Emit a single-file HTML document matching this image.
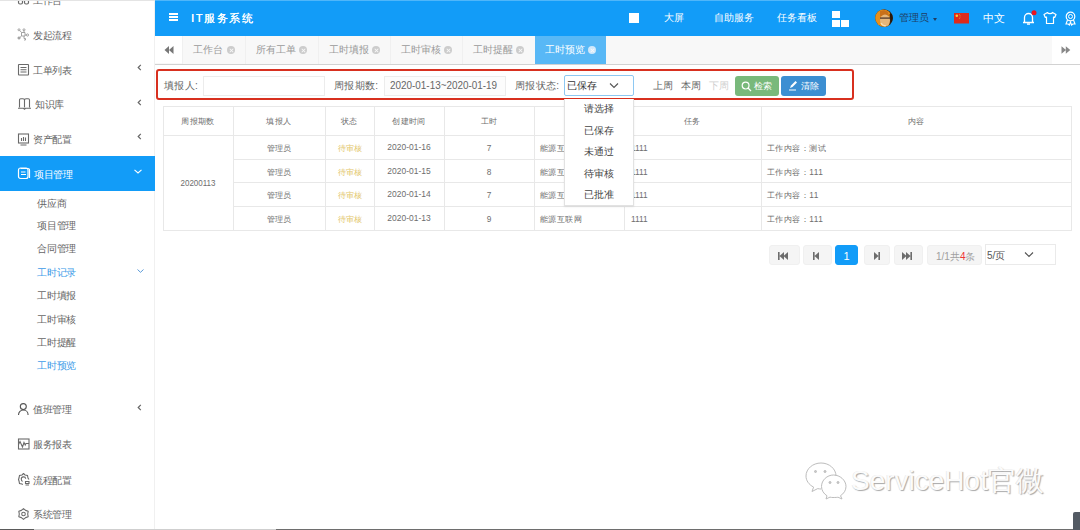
<!DOCTYPE html>
<html><head><meta charset="utf-8">
<style>
*{margin:0;padding:0;box-sizing:border-box}
html,body{width:1080px;height:530px;overflow:hidden;background:#fff;font-family:"Liberation Sans",sans-serif;color:#555}
.a{position:absolute;white-space:nowrap;line-height:1}
#side{position:absolute;left:0;top:0;width:155px;height:530px;background:#fff;border-right:1px solid #f0f0f0}
.mi{position:absolute;left:33px;font-size:10px;letter-spacing:-0.35px;line-height:1;color:#666}
.sub{position:absolute;left:37px;font-size:10px;letter-spacing:-0.2px;line-height:1;color:#666}
.ic{position:absolute;left:17px}
#hdr{position:absolute;left:155px;top:0;width:925px;height:36px;background:#129cf8}
#tabs{position:absolute;left:155px;top:36px;width:925px;height:29px;background:#f8f8f8;border-bottom:1px solid #d2d2d2}
.tab{position:absolute;top:0;height:28px;border-left:1px solid #f0f0f0;font-size:10.2px;color:#9a9a9a}
.tab span{position:absolute;top:9px;left:10px;line-height:1}
.cx{position:absolute;top:10px;width:8px;height:8px;border-radius:50%;background:#ccc}
.cx:before,.cx:after{content:"";position:absolute;left:1.5px;top:3.5px;width:5px;height:1px;background:#f9f9f9;transform:rotate(45deg)}
.cx:after{transform:rotate(-45deg)}
#form{position:absolute;left:156px;top:69px;width:698px;height:31px;border:2px solid #d8301f;border-radius:3px}
table{position:absolute;left:163px;top:106px;border-collapse:collapse;font-size:9px;color:#555}
td,th{border:1px solid #e6e6e6;font-weight:normal;text-align:center;padding:0}
.ht{top:13px;font-size:10px;color:#fff}
.ft{font-size:10px;letter-spacing:0.3px;color:#666}
.tt{font-size:8.3px;color:#6e6e6e}
.hl{position:absolute;height:1px;background:#e8e8e8}
.vl{position:absolute;width:1px;background:#e8e8e8}
.pg{position:absolute;top:245px;height:20px;background:#f5f5f5;border-radius:3px;border:1px solid #f0f0f0}
</style></head><body>
<div id="side">
  <div class="mi" style="top:-4px">工作台</div>
  <div class="mi" style="top:31px">发起流程</div>
  <div class="mi" style="top:66px">工单列表</div>
  <div class="mi" style="top:100px;left:35px">知识库</div>
  <div class="mi" style="top:135px">资产配置</div>
  <div style="position:absolute;left:0;top:156px;width:155px;height:35px;background:#129cf8"></div>
  <div class="mi" style="top:170px;color:#fff;left:34px">项目管理</div>
  <div class="sub" style="top:199px">供应商</div>
  <div class="sub" style="top:221px">项目管理</div>
  <div class="sub" style="top:244px">合同管理</div>
  <div class="sub" style="top:268px;color:#3c9be8">工时记录</div>
  <div class="sub" style="top:291px">工时填报</div>
  <div class="sub" style="top:315px">工时审核</div>
  <div class="sub" style="top:338px">工时提醒</div>
  <div class="sub" style="top:361px;color:#3c9be8">工时预览</div>
  <div class="mi" style="top:405px">值班管理</div>
  <div class="mi" style="top:440px">服务报表</div>
  <div class="mi" style="top:476px">流程配置</div>
  <div class="mi" style="top:510px">系统管理</div>

  <svg class="ic" style="top:-7px" width="13" height="13" viewBox="0 0 13 13" fill="none" stroke="#6a6a6a" stroke-width="1.2"><rect x="1.5" y="1" width="4" height="4" rx="1.5"/><rect x="7.5" y="1" width="4" height="4" rx="1.5"/><rect x="1.5" y="7" width="4" height="4" rx="1.5"/><rect x="7.5" y="7" width="4" height="4" rx="1.5"/></svg>
  <svg class="ic" style="top:28px" width="13" height="13" viewBox="0 0 13 13" fill="none" stroke="#9a9a9a" stroke-width="0.9"><circle cx="2" cy="1.8" r="1"/><circle cx="7" cy="1.8" r="1"/><circle cx="10.5" cy="7" r="1.1"/><circle cx="2" cy="10" r="1.1" fill="#aaa"/><path d="M2.8 2.5L4.5 4.5H8V8H4.5V4.5M6.5 2.5L7.5 4.5M9.4 7H8M3 9.4L4.5 8M7 8V10.5H8.5V12H7"/></svg>
  <svg class="ic" style="top:63px" width="13" height="13" viewBox="0 0 13 13" fill="none" stroke="#6a6a6a" stroke-width="1.1"><rect x="1.5" y="1.5" width="10" height="10.5" rx="0.5"/><path d="M3.5 4.5h6M3.5 6.8h6M3.5 9h6"/></svg>
  <svg class="ic" style="top:97px" width="15" height="13" viewBox="0 0 15 13" fill="none" stroke="#6a6a6a" stroke-width="1.1"><path d="M2.5 10.5V3c0-.8.4-1.2 1.2-1.2H6c.9 0 1.5.6 1.5 1.5v7.2M7.5 3.3c0-.9.6-1.5 1.5-1.5h2.3c.8 0 1.2.4 1.2 1.2v7.5"/><path d="M1 11.3h5.5l1 .9 1-.9H14"/></svg>
  <svg class="ic" style="top:132px" width="13" height="14" viewBox="0 0 13 14" fill="none" stroke="#6a6a6a" stroke-width="1.1"><rect x="1.5" y="2" width="10" height="9" /><path d="M4.5 9V6M6.5 9V5M8.5 9V5.5M3.5 13h6" /></svg>
  <svg class="ic" style="top:166px" width="14" height="14" viewBox="0 0 14 14" fill="none" stroke="#fff" stroke-width="1.2"><rect x="1.5" y="2" width="9.5" height="10.5" rx="2"/><path d="M3.5 2.5h7.5a1.5 1.5 0 0 1 1.5 1.5v8" /><path d="M4 6h4.5M4 8.5h5"/></svg>
  <svg class="ic" style="top:401px" width="13" height="15" viewBox="0 0 13 15" fill="none" stroke="#555" stroke-width="1.1"><circle cx="6.3" cy="5.6" r="3"/><path d="M1.5 14c0-3 2.2-5 4.8-5s4.8 2 4.8 5"/></svg>
  <svg class="ic" style="top:437px" width="13" height="14" viewBox="0 0 13 14" fill="none" stroke="#6a6a6a" stroke-width="1.1"><rect x="1.5" y="2" width="10.5" height="10"/><path d="M1.5 7.5L3 4.5 5.5 10 7 5.5 8.2 8 9 6.5h3"/></svg>
  <svg class="ic" style="top:472px" width="13" height="14" viewBox="0 0 13 14" fill="none" stroke="#6a6a6a" stroke-width="1.1"><path d="M6.5 1.5l1.5 1.5 2.5.5.5 2.5 1 1.5M6.5 1.5L5 3l-2.5.5L2 6 1.5 7.5l.5 1.5.5 2.5 2.5.5.8.7"/><path d="M5.5 9.5c-.8-.5-1.2-1.2-1.2-2.2a2.2 2.2 0 0 1 4.4-.5"/><path d="M8.5 9.5h3.5v2h-3.5zM8.5 13h3.5" /></svg>
  <svg class="ic" style="top:507px" width="13" height="14" viewBox="0 0 13 14" fill="none" stroke="#6a6a6a" stroke-width="1.1" stroke-linejoin="round"><path d="M6.50 1.60 L8.60 3.36 L11.18 4.30 L10.70 7.00 L11.18 9.70 L8.60 10.64 L6.50 12.40 L4.40 10.64 L1.82 9.70 L2.30 7.00 L1.82 4.30 L4.40 3.36Z"/><circle cx="6.5" cy="7" r="1.8"/></svg>
  <svg style="position:absolute;left:137px;top:64px" width="5" height="7" viewBox="0 0 5 7"><path d="M3.8 0.8L1.2 3.5 3.8 6.2" fill="none" stroke="#666" stroke-width="1.2"/></svg>
  <svg style="position:absolute;left:137px;top:99px" width="5" height="7" viewBox="0 0 5 7"><path d="M3.8 0.8L1.2 3.5 3.8 6.2" fill="none" stroke="#666" stroke-width="1.2"/></svg>
  <svg style="position:absolute;left:137px;top:133px" width="5" height="7" viewBox="0 0 5 7"><path d="M3.8 0.8L1.2 3.5 3.8 6.2" fill="none" stroke="#666" stroke-width="1.2"/></svg>
  <svg style="position:absolute;left:137px;top:404px" width="5" height="7" viewBox="0 0 5 7"><path d="M3.8 0.8L1.2 3.5 3.8 6.2" fill="none" stroke="#666" stroke-width="1.2"/></svg>
  <svg style="position:absolute;left:134px;top:169px" width="8" height="5" viewBox="0 0 8 5"><path d="M0.5 0.8L4 4 7.5 0.8" fill="none" stroke="#fff" stroke-width="1.1"/></svg>
  <svg style="position:absolute;left:137px;top:269px" width="7" height="4" viewBox="0 0 7 4"><path d="M0.5 0.5L3.5 3.3 6.5 0.5" fill="none" stroke="#5a9ad8" stroke-width="1"/></svg>
</div>
<div id="hdr">
  <div style="position:absolute;left:13.5px;top:13px;width:9.5px;height:2px;background:#fff;box-shadow:0 3px 0 #fff,0 6px 0 #fff"></div>
  <div class="a" style="left:36px;top:12.5px;font-size:11px;font-weight:normal;letter-spacing:1.6px;color:#fff;text-shadow:0.3px 0 0 #fff">IT服务系统</div>
  <div style="position:absolute;left:474px;top:13px;width:10px;height:10px;background:#fff"></div>
  <div class="a ht" style="left:509px">大屏</div>
  <div class="a ht" style="left:559px">自助服务</div>
  <div class="a ht" style="left:622px">任务看板</div>
  <div style="position:absolute;left:677px;top:11px;width:8px;height:7px;background:#fff"></div>
  <div style="position:absolute;left:677px;top:20px;width:8px;height:7px;background:#fff"></div>
  <div style="position:absolute;left:686px;top:20px;width:8px;height:7px;background:#fff"></div>
  <svg style="position:absolute;left:719.5px;top:9.2px" width="18" height="18" viewBox="0 0 18 18"><defs><clipPath id="av"><circle cx="9" cy="9" r="8.8"/></clipPath></defs><g clip-path="url(#av)"><rect width="18" height="18" fill="#3a2410"/><path d="M0 3C2 1 5 0 9 0.5 12 1 14 2 15 4L14 18H0z" fill="#e8901c"/><path d="M5 2c3-1.5 6-1 8 1l1 4-9 .5z" fill="#c8701a"/><ellipse cx="10" cy="11.5" rx="5" ry="6" fill="#e5b67a"/><path d="M5 8.3h10v1.6H5z" fill="#5a4030" opacity=".8"/><path d="M6 14c1 2 3 3 5 3" stroke="#f5dcb0" stroke-width="1.5" fill="none"/><path d="M15.5 5c1.5 3 1.8 8 .5 12" stroke="#2a1808" stroke-width="2.4" fill="none"/></g></svg>
  <div class="a ht" style="left:744px;color:#1f3d63">管理员</div>
  <div style="position:absolute;left:778px;top:17.5px;width:0;height:0;border-left:2.5px solid transparent;border-right:2.5px solid transparent;border-top:3px solid #1f3d63"></div>
  <svg style="position:absolute;left:799px;top:13px" width="15" height="10.5" viewBox="0 0 15 10.5"><rect width="15" height="10.5" fill="#de2a1c"/><circle cx="2.8" cy="2.8" r="1.3" fill="#f6d13a"/><circle cx="5.3" cy="1.3" r="0.45" fill="#f6d13a"/><circle cx="6" cy="2.6" r="0.45" fill="#f6d13a"/><circle cx="6" cy="4" r="0.45" fill="#f6d13a"/><circle cx="5.3" cy="5.2" r="0.45" fill="#f6d13a"/></svg>
  <div class="a ht" style="left:828px;font-size:11px">中文</div>
  <svg style="position:absolute;left:866px;top:10px" width="16" height="16" viewBox="0 0 16 16"><path d="M2 12.5h11M3.5 12.5V7.5a4 4 0 0 1 8 0v5M6 14.2h3" fill="none" stroke="#fff" stroke-width="1.3"/><circle cx="13" cy="2.8" r="2.5" fill="#e8141e"/></svg>
  <svg style="position:absolute;left:888px;top:11px" width="14" height="14" viewBox="0 0 14 14"><path d="M4.5 1.5L1 3.5 2.3 6.5 3.5 6v6.5h7V6l1.2.5L13 3.5 9.5 1.5C9 3 5 3 4.5 1.5z" fill="none" stroke="#fff" stroke-width="1.2" stroke-linejoin="round"/></svg>
  <svg style="position:absolute;left:908px;top:11px" width="15" height="15" viewBox="0 0 15 15"><circle cx="7.5" cy="5.5" r="4.3" fill="none" stroke="#fff" stroke-width="1.2"/><circle cx="7.5" cy="5.5" r="2" fill="none" stroke="#fff" stroke-width="1"/><path d="M4.5 9L3 13h2.2l1.2 1L7.5 11l1.1 3 1.2-1H12L10.5 9" fill="none" stroke="#fff" stroke-width="1.1"/></svg>
</div>
<div id="tabs">
  <div style="position:absolute;left:0;top:0;width:27px;height:27px;background:#fff"></div>
  <div class="tab" style="left:27px;width:63px"><span>工作台</span><i class="cx" style="left:44px"></i></div>
  <div class="tab" style="left:90px;width:73px"><span>所有工单</span><i class="cx" style="left:53px"></i></div>
  <div class="tab" style="left:163px;width:72px"><span>工时填报</span><i class="cx" style="left:53px"></i></div>
  <div class="tab" style="left:235px;width:72px"><span>工时审核</span><i class="cx" style="left:53px"></i></div>
  <div class="tab" style="left:307px;width:73px"><span>工时提醒</span><i class="cx" style="left:53px"></i></div>
  <div class="tab" style="left:380px;width:71px;background:#58b8f6;color:#fff;border-left:none"><span>工时预览</span><i class="cx" style="left:53px;background:#d0e8fb"></i></div>
  <div style="position:absolute;left:897px;top:0;width:28px;height:28px;background:#fff"></div>
  <svg style="position:absolute;left:9px;top:10px" width="10" height="8" viewBox="0 0 10 8"><path d="M5 0L0.5 4 5 8zM9.5 0L5 4l4.5 4z" fill="#777"/></svg>
  <svg style="position:absolute;left:906px;top:10px" width="10" height="8" viewBox="0 0 10 8"><path d="M0.5 0.3L5 4 0.5 7.7zM4.8 0.3L9.3 4 4.8 7.7z" fill="#888"/></svg>
</div>
<div id="form"></div>
<div class="a ft" style="left:164px;top:81px">填报人:</div>
<div style="position:absolute;left:203px;top:76px;width:122px;height:20px;border:1px solid #ececec"></div>
<div class="a ft" style="left:334px;top:81px">周报期数:</div>
<div style="position:absolute;left:384px;top:76px;width:122px;height:20px;border:1px solid #ececec;background:#fcfcfc"></div>
<div class="a ft" style="left:390px;top:80px;font-size:11px;letter-spacing:0;transform:scaleX(0.9);transform-origin:0 0">2020-01-13~2020-01-19</div>
<div class="a ft" style="left:515px;top:81px">周报状态:</div>
<div style="position:absolute;left:564px;top:75px;width:70px;height:21px;border:1px solid #8ec8f2;border-radius:2px;background:#fff"></div>
<div class="a ft" style="left:567px;top:81px;color:#333;letter-spacing:0">已保存</div>
<svg style="position:absolute;left:609px;top:82px" width="10" height="7" viewBox="0 0 10 7"><path d="M1 1.5l4 4 4-4" fill="none" stroke="#555" stroke-width="1.1"/></svg>
<div class="a ft" style="left:653px;top:81px">上周</div>
<div class="a ft" style="left:681px;top:81px">本周</div>
<div class="a ft" style="left:709px;top:81px;color:#d0d0d0">下周</div>
<div style="position:absolute;left:735px;top:76px;width:44px;height:20px;background:#79b97b;border-radius:3px"></div>
<svg style="position:absolute;left:741px;top:81px" width="11" height="11" viewBox="0 0 11 11"><circle cx="4.6" cy="4.6" r="3.4" fill="none" stroke="#fff" stroke-width="1.2"/><path d="M7 7l3 3" stroke="#fff" stroke-width="1.3"/></svg>
<div class="a" style="left:754px;top:82px;font-size:9px;color:#fff">检索</div>
<div style="position:absolute;left:781px;top:76px;width:45px;height:20px;background:#3c8fd2;border-radius:3px"></div>
<svg style="position:absolute;left:788px;top:80px" width="10" height="11" viewBox="0 0 10 11"><path d="M2 8l1-2.5 4.5-4.5 1.5 1.5L4.5 7z" fill="#fff"/><path d="M1 10h7" stroke="#fff" stroke-width="1"/></svg>
<div class="a" style="left:801px;top:82px;font-size:9px;color:#fff">清除</div>
<div class="hl" style="left:163px;top:106px;width:909px"></div>
<div class="hl" style="left:163px;top:135px;width:909px"></div>
<div class="hl" style="left:233px;top:159px;width:839px"></div>
<div class="hl" style="left:233px;top:182px;width:839px"></div>
<div class="hl" style="left:233px;top:206px;width:839px"></div>
<div class="hl" style="left:163px;top:230px;width:909px"></div>
<div class="vl" style="left:163px;top:106px;height:125px"></div>
<div class="vl" style="left:233px;top:106px;height:125px"></div>
<div class="vl" style="left:325px;top:106px;height:125px"></div>
<div class="vl" style="left:374px;top:106px;height:125px"></div>
<div class="vl" style="left:444px;top:106px;height:125px"></div>
<div class="vl" style="left:534px;top:106px;height:125px"></div>
<div class="vl" style="left:624px;top:106px;height:125px"></div>
<div class="vl" style="left:761px;top:106px;height:125px"></div>
<div class="vl" style="left:1071px;top:106px;height:125px"></div>
<div class="a tt" style="left:163px;width:70px;text-align:center;top:117.5px;font-size:8px;letter-spacing:0.4px">周报期数</div>
<div class="a tt" style="left:233px;width:92px;text-align:center;top:117.5px;font-size:8px;letter-spacing:0.4px">填报人</div>
<div class="a tt" style="left:325px;width:49px;text-align:center;top:117.5px;font-size:8px;letter-spacing:0.4px">状态</div>
<div class="a tt" style="left:374px;width:70px;text-align:center;top:117.5px;font-size:8px;letter-spacing:0.4px">创建时间</div>
<div class="a tt" style="left:444px;width:90px;text-align:center;top:117.5px;font-size:8px;letter-spacing:0.4px">工时</div>
<div class="a tt" style="left:534px;width:90px;text-align:center;top:117.5px;font-size:8px;letter-spacing:0.4px">项目</div>
<div class="a tt" style="left:624px;width:137px;text-align:center;top:117.5px;font-size:8px;letter-spacing:0.4px">任务</div>
<div class="a tt" style="left:761px;width:310px;text-align:center;top:117.5px;font-size:8px;letter-spacing:0.4px">内容</div>
<div class="a tt" style="left:163px;width:70px;text-align:center;top:179px;font-size:9px;transform:scaleX(0.89)">20200113</div>
<div class="a tt" style="left:233px;width:92px;text-align:center;top:144px;">管理员</div>
<div class="a tt" style="left:325px;width:49px;text-align:center;top:144px;color:#e3c66a">待审核</div>
<div class="a tt" style="left:374px;width:70px;text-align:center;top:143px;font-size:9px;transform:scaleX(0.94)">2020-01-16</div>
<div class="a tt" style="left:444px;width:90px;text-align:center;top:144px;">7</div>
<div class="a tt" style="left:540px;top:144px;letter-spacing:0.4px">能源互联网</div>
<div class="a tt" style="left:631px;top:144px">1111</div>
<div class="a tt" style="left:767px;top:144px;letter-spacing:0.45px">工作内容：测试</div>
<div class="a tt" style="left:233px;width:92px;text-align:center;top:167.5px;">管理员</div>
<div class="a tt" style="left:325px;width:49px;text-align:center;top:167.5px;color:#e3c66a">待审核</div>
<div class="a tt" style="left:374px;width:70px;text-align:center;top:166.5px;font-size:9px;transform:scaleX(0.94)">2020-01-15</div>
<div class="a tt" style="left:444px;width:90px;text-align:center;top:167.5px;">8</div>
<div class="a tt" style="left:540px;top:167.5px;letter-spacing:0.4px">能源互联网</div>
<div class="a tt" style="left:631px;top:167.5px">1111</div>
<div class="a tt" style="left:767px;top:167.5px;letter-spacing:0.45px">工作内容：111</div>
<div class="a tt" style="left:233px;width:92px;text-align:center;top:191px;">管理员</div>
<div class="a tt" style="left:325px;width:49px;text-align:center;top:191px;color:#e3c66a">待审核</div>
<div class="a tt" style="left:374px;width:70px;text-align:center;top:190px;font-size:9px;transform:scaleX(0.94)">2020-01-14</div>
<div class="a tt" style="left:444px;width:90px;text-align:center;top:191px;">7</div>
<div class="a tt" style="left:540px;top:191px;letter-spacing:0.4px">能源互联网</div>
<div class="a tt" style="left:631px;top:191px">1111</div>
<div class="a tt" style="left:767px;top:191px;letter-spacing:0.45px">工作内容：11</div>
<div class="a tt" style="left:233px;width:92px;text-align:center;top:215px;">管理员</div>
<div class="a tt" style="left:325px;width:49px;text-align:center;top:215px;color:#e3c66a">待审核</div>
<div class="a tt" style="left:374px;width:70px;text-align:center;top:214px;font-size:9px;transform:scaleX(0.94)">2020-01-13</div>
<div class="a tt" style="left:444px;width:90px;text-align:center;top:215px;">9</div>
<div class="a tt" style="left:540px;top:215px;letter-spacing:0.4px">能源互联网</div>
<div class="a tt" style="left:631px;top:215px">1111</div>
<div class="a tt" style="left:767px;top:215px;letter-spacing:0.45px">工作内容：111</div>
<div style="position:absolute;left:564px;top:99px;width:70px;height:107px;background:#fff;border:1px solid #e2e2e2;border-top:none;box-shadow:0 1px 2px rgba(0,0,0,.08)"></div>
<div class="a ft" style="left:584px;top:104px;color:#444;letter-spacing:0">请选择</div>
<div class="a ft" style="left:584px;top:126px;color:#444;letter-spacing:0">已保存</div>
<div class="a ft" style="left:584px;top:147px;color:#444;letter-spacing:0">未通过</div>
<div class="a ft" style="left:584px;top:169px;color:#444;letter-spacing:0">待审核</div>
<div class="a ft" style="left:584px;top:190px;color:#444;letter-spacing:0">已批准</div>
<div class="pg" style="left:769px;width:31px"></div>
<svg style="position:absolute;left:777px;top:251px" width="12" height="10" viewBox="0 0 12 10"><path d="M1 1h1.6v8H1zM2.5 5L7 1v8zM6.5 5L11 1v8z" fill="#6d6d6d"/></svg>
<div class="pg" style="left:803px;width:29px"></div>
<svg style="position:absolute;left:812px;top:251px" width="10" height="10" viewBox="0 0 10 10"><path d="M1 1h1.6v8H1zM2.5 5L7 1v8z" fill="#6d6d6d"/></svg>
<div class="pg" style="left:835px;width:23px;background:#129cf8;border-color:#129cf8"></div>
<div class="a" style="left:835px;width:23px;text-align:center;top:250.5px;font-size:11px;color:#fff">1</div>
<div class="pg" style="left:864px;width:26px"></div>
<svg style="position:absolute;left:871px;top:251px" width="10" height="10" viewBox="0 0 10 10"><path d="M7.4 1H9v8H7.4zM7.5 5L3 1v8z" fill="#6d6d6d"/></svg>
<div class="pg" style="left:894px;width:29px"></div>
<svg style="position:absolute;left:901px;top:251px" width="12" height="10" viewBox="0 0 12 10"><path d="M1 1l4.5 4L1 9zM5 1l4.5 4L5 9zM9.4 1H11v8H9.4z" fill="#6d6d6d"/></svg>
<div class="pg" style="left:927px;width:55px"></div>
<div class="a" style="left:936px;top:252px;font-size:10px;color:#a0a0a0">1/1共<span style="color:#e33">4</span>条</div>
<div style="position:absolute;left:985px;top:244px;width:71px;height:21px;border:1px solid #eaeaea;background:#fff"></div>
<div class="a" style="left:987px;top:251px;font-size:10px;color:#555;letter-spacing:0">5/页</div>
<svg style="position:absolute;left:1024px;top:251px" width="10" height="7" viewBox="0 0 10 7"><path d="M1 1.5l4 4 4-4" fill="none" stroke="#555" stroke-width="1.1"/></svg>
<svg style="position:absolute;left:803px;top:461px" width="48" height="40" viewBox="0 0 48 40" fill="none" stroke="#bdbdbd" stroke-width="1">
<path d="M18 28c-1 0-2.2-.2-3.3-.4L9 30.5l1.6-4.4C5.8 23.6 3 19.6 3 15 3 7.8 9.8 2 18 2s15 5.8 15 13"/>
<path d="M30 36.5c-1 0-2-.1-3-.4L23 38l1-3.2c-3.3-2.1-5.5-5.5-5.5-9.3 0-6.4 5.7-11.5 12-11.5s12.5 5.1 12.5 11.5c0 3.8-2.2 7.1-5.5 9.2L39 38l-4-1.8c-1 .2-2.2.3-5 .3z"/>
<circle cx="12.5" cy="10.5" r="1" fill="#c9c9c9"/><circle cx="22" cy="10.5" r="1" fill="#c9c9c9"/><circle cx="27" cy="21.5" r="1" fill="#c9c9c9"/><circle cx="35" cy="21.5" r="1" fill="#c9c9c9"/>
</svg>
<div class="a" style="left:851px;top:467px;font-size:28px;color:#fbfbfb;text-shadow:1px 1px 1px #a8a8a8,-0.5px -0.5px 0.5px #e6e6e6">ServiceHot官微</div>
<div style="position:absolute;left:0;top:0;width:155px;height:1px;background:#e4e4e4"></div>
<div style="position:absolute;left:155px;top:0;width:925px;height:1px;background:#4fb6fa"></div>
<div style="position:absolute;left:0;top:529px;width:34px;height:1px;background:#5a5a5a"></div>
<div style="position:absolute;left:34px;top:529px;width:242px;height:1px;background:#cfcfcf"></div>
<div style="position:absolute;left:276px;top:529px;width:800px;height:1px;background:#6e6e6e"></div>
<div style="position:absolute;left:1073px;top:512px;width:7px;height:18px;background:#545b64;border-radius:2px 0 0 0"></div>
</body></html>
